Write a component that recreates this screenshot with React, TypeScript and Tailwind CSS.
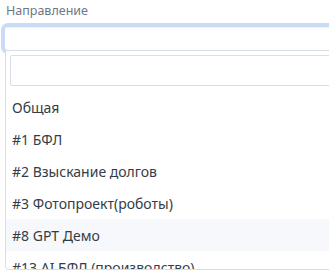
import React from "react";

const options = [
  "Общая",
  "#1 БФЛ",
  "#2 Взыскание долгов",
  "#3 Фотопроект(роботы)",
  "#8 GPT Демо",
  "#13 AI БФЛ (производство)",
  "#14 Юристы",
];

export default function App() {
  const active = 4;

  return (
    <div className="h-[272px] w-[329px] overflow-hidden bg-white font-['Noto_Sans',sans-serif]">
      <div className="pl-[6px] pt-[3px] text-[12.5px] leading-[15px] text-[#6c7886]">Направление</div>

      <div className="relative ml-[1px] mt-[5px]">
        {/* focused select box */}
        <div className="h-[31px] w-[420px] rounded-[7px] border-[4px] border-[#c9dbf5] bg-white">
          <div className="h-full w-full rounded-[3px] border-t border-[#eef2f7]" />
        </div>

        {/* open dropdown */}
        <div className="absolute left-[4px] top-[27px] h-[220px] w-[420px] overflow-hidden rounded-b-[4px] border border-[#d7dee7] bg-white">
          <div className="px-[4px] pb-[5px] pt-[4px]">
            <div className="h-[31px] rounded-[2px] border border-[#d7dee7] bg-white" />
          </div>
          <ul>
            {options.map((o, i) => (
              <li
                key={o}
                className={
                  "flex h-[32px] items-center pl-[6px] text-[14px] text-[#343d47] " +
                  (i === active ? "bg-[#f6f8fb]" : "")
                }
              >
                {o}
              </li>
            ))}
          </ul>
        </div>
      </div>
    </div>
  );
}
